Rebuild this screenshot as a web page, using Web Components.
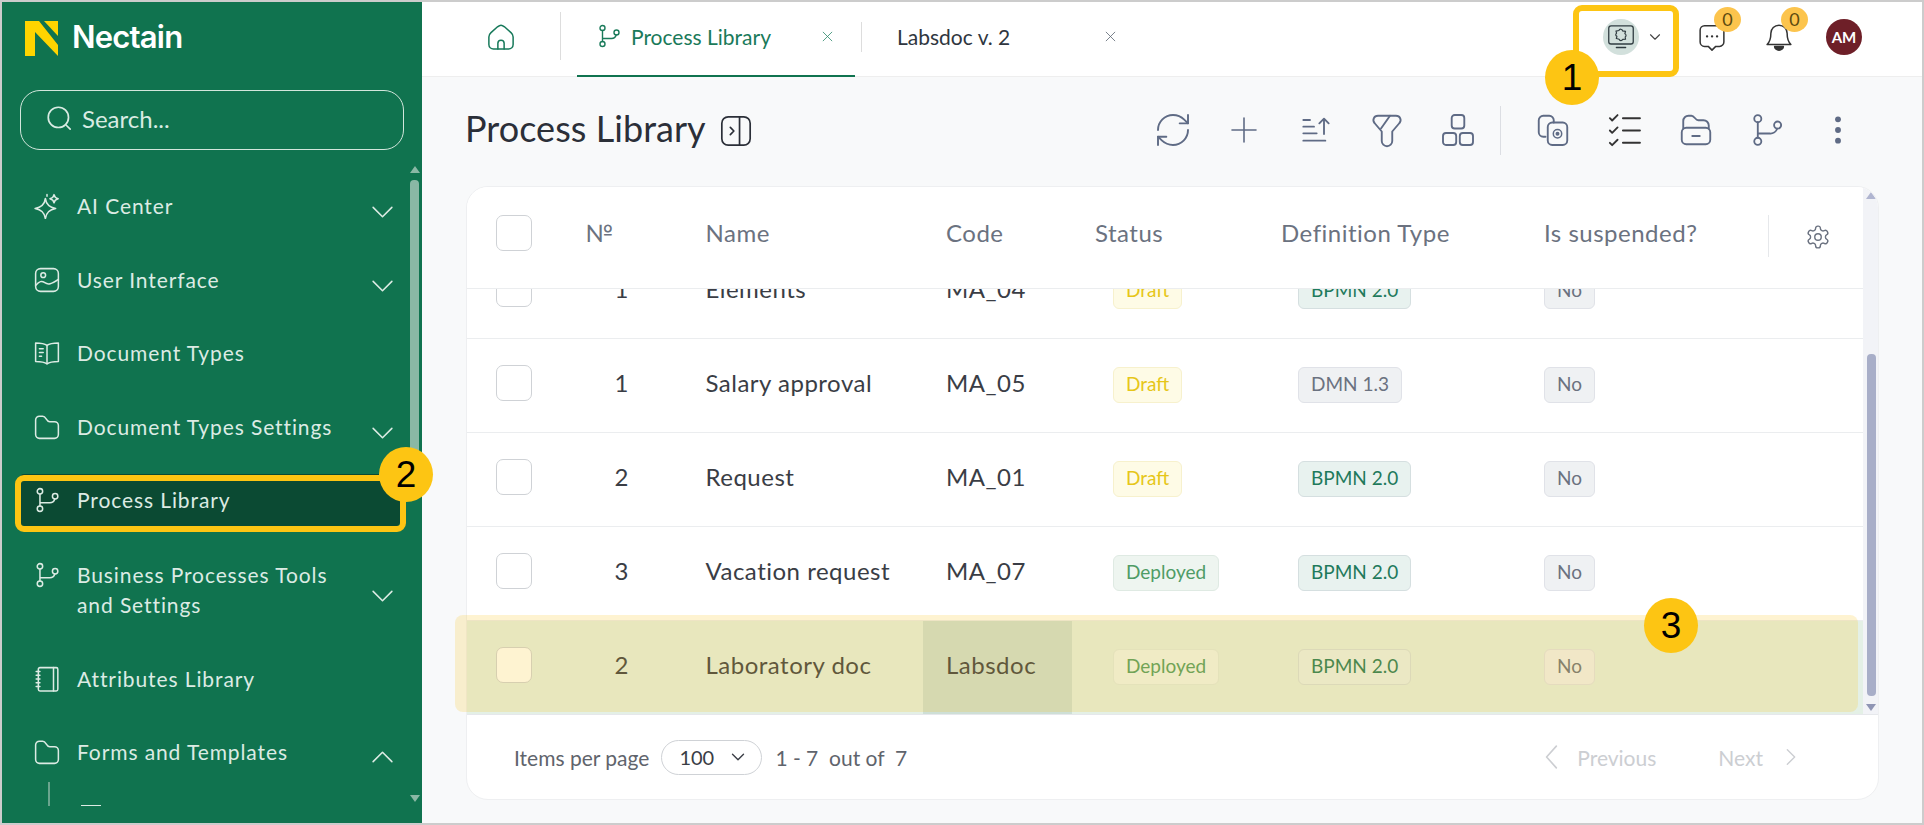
<!DOCTYPE html>
<html lang="en">
<head>
<meta charset="utf-8">
<title>Process Library</title>
<style>
	html, body { margin: 0; padding: 0; background: #f8f9fa; }
	body { font-family: Lato, "Liberation Sans", sans-serif; width: 1924px; height: 825px; overflow: hidden; }
</style>
</head>
<body>
<app-shell>
	<side-bar slot="side">
		<nav-item icon="sparkle" chevron="down">AI Center</nav-item>
		<nav-item icon="image" chevron="down">User Interface</nav-item>
		<nav-item icon="book">Document Types</nav-item>
		<nav-item icon="folder" chevron="down">Document Types Settings</nav-item>
		<nav-item icon="branch" selected>Process Library</nav-item>
		<nav-item icon="branch" chevron="down" tall>Business Processes Tools<br>and Settings</nav-item>
		<nav-item icon="notebook">Attributes Library</nav-item>
		<nav-item icon="folder" chevron="up">Forms and Templates</nav-item>
	</side-bar>
	<top-bar slot="top">
		<tab-item icon="branch" active width="278">Process Library</tab-item>
		<tab-item width="265">Labsdoc v. 2</tab-item>
	</top-bar>
	<page-head slot="main">Process Library</page-head>
	<data-card slot="main">
		<table-row num="1" code="MA_04" status="Draft" type="BPMN 2.0">Elements</table-row>
		<table-row num="1" code="MA_05" status="Draft" type="DMN 1.3">Salary approval</table-row>
		<table-row num="2" code="MA_01" status="Draft" type="BPMN 2.0">Request</table-row>
		<table-row num="3" code="MA_07" status="Deployed" type="BPMN 2.0">Vacation request</table-row>
		<table-row num="2" code="Labsdoc" status="Deployed" type="BPMN 2.0" hot>Laboratory doc</table-row>
	</data-card>
</app-shell>

<call-out kind="wash" style="left:455px;top:615px;width:1403px;height:97px"></call-out>
<call-out kind="box" style="left:1573px;top:5px;width:106px;height:72px"></call-out>
<call-out kind="box" style="left:15px;top:475px;width:391px;height:57px"></call-out>
<call-out kind="dot" style="left:1545px;top:50px">1</call-out>
<call-out kind="dot" style="left:379px;top:447px">2</call-out>
<call-out kind="dot" style="left:1644px;top:598px">3</call-out>

<script>
const ICONS = {
	search: '<circle cx="11" cy="11" r="9"/><path d="M18 18l3.500 3.500"/>',
	sparkle: '<path d="M10.500 5c.6 5 3 8.200 9.500 9.300-6.500 1.100-8.900 4.300-9.500 9.300-.6-5-3-8.200-9.500-9.300 6.500-1.100 8.900-4.300 9.500-9.300z"/><path d="M18.500 1.500c.3 2 1.400 3.200 3.800 3.800-2.400.6-3.500 1.800-3.800 3.800-.3-2-1.400-3.200-3.800-3.800 2.400-.6 3.500-1.800 3.800-3.800z"/><path d="M12 1.500v1.500"/>',
	image: '<rect x="1.500" y="1.500" width="21" height="21" rx="4.500"/><circle cx="8.500" cy="7.500" r="2.200"/><path d="M1.500 17c3.500-4 5.500-4.500 8.500-2.500s6 1.500 12.500-3"/>',
	book: '<path d="M12 5C10 3.500 6.500 2.800 1.500 2.800v17c5 0 8.500.7 10.500 2.200 2-1.500 5.500-2.200 10.500-2.200v-17C17.500 2.800 14 3.500 12 5z"/><path d="M12 5v17M5 8h3.500M5 11.500h3.500M5 15h2"/>',
	folder: '<path d="M1.500 5.500A3.500 3.500 0 0 1 5 2h3c1.500 0 2.300 1 3.200 2.600S13 7.200 14.500 7.200H19a3.500 3.500 0 0 1 3.500 3.500V19a3.500 3.500 0 0 1-3.500 3.500H5A3.500 3.500 0 0 1 1.500 19z"/>',
	branch: '<circle cx="5.500" cy="4" r="2.500"/><circle cx="5.500" cy="20" r="2.500"/><circle cx="19.500" cy="8.500" r="2.500"/><path d="M5.500 6.500v11M5.500 14.500H14a5 5 0 0 0 5.200-3.500"/>',
	notebook: '<rect x="4" y="1.500" width="18" height="21.500" rx="1.500"/><path d="M18 1.500v21.500M2 5h3.500M2 8.500h3.500M2 12h3.500M2 15.500h3.500M2 19h3.500"/>',
	down: '<path d="M3 8l9 9 9-9"/>',
	up: '<path d="M3 16l9-9 9 9"/>',
	small: '<path d="M6 9l6 6 6-6"/>',
	left: '<path d="M16 2L7 12l9 10"/>',
	right: '<path d="M8 4l8 8-8 8"/>',
	close: '<path d="M4 4l16 16M20 4L4 20"/>',
	home: '<path d="M12 2.500c-1.200 0-2 .7-3 1.500L4 8.500c-1.200 1.100-1.700 2-1.700 3.500v6c0 2 1.700 3.500 3.700 3.500h12c2 0 3.700-1.500 3.700-3.500v-6c0-1.500-.5-2.400-1.700-3.500L15 4c-1-.8-1.800-1.500-3-1.500z"/><path d="M9.500 21.500V17a2.500 2.500 0 0 1 5 0v4.500"/>',
	panel: '<rect x="2" y="2" width="20" height="20" rx="4.500"/><path d="M14.500 2v20M8 9.500l2.500 2.500L8 14.500"/>',
	refresh: '<path d="M3 12a9 9 0 0 1 9-9 9.750 9.750 0 0 1 6.740 2.740L21 8"/><path d="M21 3v5h-5"/><path d="M21 12a9 9 0 0 1-9 9 9.750 9.750 0 0 1-6.740-2.740L3 16"/><path d="M8 16H3v5"/>',
	plus: '<path d="M12 3v18M3 12h18"/>',
	sort: '<path d="M2.500 4.500h5M2.500 9.500h8M2.500 14.500h10M2.500 20h16.500M18 15V3.500M14.500 7L18 3.500 21.500 7"/>',
	filter: '<path d="M6 2.500h12c2.800 0 4 3 2.200 5L15.500 13v6.300a3.300 3.300 0 0 1-7 0V13L3.800 7.500C2 5.500 3.200 2.500 6 2.500z"/><path d="M14 2.500L8 11"/>',
	blocks: '<rect x="7.800" y="2" width="8.400" height="9" rx="2"/><rect x="2" y="14" width="8.800" height="8" rx="2"/><rect x="13.200" y="14" width="8.800" height="8" rx="2"/>',
	copyeye: '<path d="M7 16.500H5.500a3 3 0 0 1-3-3v-8a3 3 0 0 1 3-3h4a3 3 0 0 1 3 3V7"/><rect x="8.500" y="7" width="13" height="15" rx="3"/><circle cx="15" cy="14.500" r="2.800" stroke-width="1"/><circle cx="15" cy="14.500" r=".7" fill="currentColor"/>',
	checks: '<path d="M2.500 4l1.500 1.500L7.500 2M2.500 12l1.500 1.500L7.500 10M2.500 20l1.500 1.500L7.500 18" stroke-width="1.200"/><path d="M11 4h11M11 12h11M11 20h11"/>',
	foldermin: '<path d="M3.500 11V6A3.500 3.500 0 0 1 7 2.500h2c2 0 2.500 3 4.500 3H17A3.500 3.500 0 0 1 20.500 9v2"/><rect x="2.500" y="10.500" width="19" height="11" rx="3"/><path d="M9.500 16h5"/>',
	dots: '<circle cx="12" cy="4" r="2.200" fill="currentColor" stroke="none"/><circle cx="12" cy="12" r="2.200" fill="currentColor" stroke="none"/><circle cx="12" cy="20" r="2.200" fill="currentColor" stroke="none"/>',
	chat: '<path d="M6 3h12a3.500 3.500 0 0 1 3.500 3.500V16a3.500 3.500 0 0 1-3.500 3.500h-3L12 22.500l-3-3H6A3.500 3.500 0 0 1 2.500 16V6.500A3.500 3.500 0 0 1 6 3z"/><path d="M8 11.500h.1M12 11.500h.1M16 11.500h.1" stroke-width="1.800"/>',
	bell: '<path d="M12 2.500a6.500 6.500 0 0 0-6.500 6.500c0 5-1 7-3 9h19c-2-2-3-4-3-9A6.500 6.500 0 0 0 12 2.500z"/><path d="M8.500 19.500h7a3.500 3 0 0 1-7 0z" fill="currentColor"/>',
	monitor: '<rect x="1.500" y="2.500" width="21" height="15.500" rx="2"/><path d="M8 21h8"/><path d="M10.200 6.400a1.600 1.600 0 0 1 3.100.3l2.600.5-.6 2a1.500 1.500 0 0 1 .3 2.700l.3 2-2.500.2a1.600 1.600 0 0 1-3-.2l-2.400-.6.500-1.900a1.500 1.500 0 0 1-.3-2.700L7.700 7z" stroke-width="1"/>',
	gear: '<path d="M12.220 2h-.44a2 2 0 0 0-2 2v.18a2 2 0 0 1-1 1.730l-.43.25a2 2 0 0 1-2 0l-.15-.08a2 2 0 0 0-2.730.73l-.22.38a2 2 0 0 0 .73 2.730l.15.1a2 2 0 0 1 1 1.720v.51a2 2 0 0 1-1 1.740l-.15.09a2 2 0 0 0-.73 2.730l.22.38a2 2 0 0 0 2.730.73l.15-.08a2 2 0 0 1 2 0l.43.25a2 2 0 0 1 1 1.730V20a2 2 0 0 0 2 2h.44a2 2 0 0 0 2-2v-.18a2 2 0 0 1 1-1.730l.43-.25a2 2 0 0 1 2 0l.15.08a2 2 0 0 0 2.730-.73l.22-.39a2 2 0 0 0-.73-2.730l-.15-.08a2 2 0 0 1-1-1.740v-.5a2 2 0 0 1 1-1.740l.15-.09a2 2 0 0 0 .73-2.730l-.22-.38a2 2 0 0 0-2.730-.73l-.15.08a2 2 0 0 1-2 0l-.43-.25a2 2 0 0 1-1-1.730V4a2 2 0 0 0-2-2z"/><circle cx="12" cy="12" r="3"/>'
};

class UiIcon extends HTMLElement {
	connectedCallback() {
		const size = this.getAttribute('size') || 24;
		const weight = this.getAttribute('weight') || 1.5;
		this.attachShadow({ mode: 'open' });
		this.shadowRoot.innerHTML = `
			<style>
				:host { display: inline-flex; flex: none; width: ${size}px; height: ${size}px; }
				svg { width: 100%; height: 100%; fill: none; stroke: currentColor; stroke-width: ${weight}; stroke-linecap: round; stroke-linejoin: round; }
			</style>
			<svg viewBox="0 0 24 24">${ICONS[this.getAttribute('name')] || ''}</svg>`;
	}
}

class AppShell extends HTMLElement {
	constructor() {
		super();
		this.attachShadow({ mode: 'open' });
		this.shadowRoot.innerHTML = `
			<style>
				:host { display: flex; box-sizing: border-box; width: 1924px; height: 825px; border: 2px solid #cccccc; background: #f8f9fa; }
				main { flex: 1; display: flex; flex-direction: column; min-width: 0; }
			</style>
			<slot name="side"></slot>
			<main>
				<slot name="top"></slot>
				<slot name="main"></slot>
			</main>`;
	}
}

class SideBar extends HTMLElement {
	constructor() {
		super();
		this.attachShadow({ mode: 'open' });
		this.shadowRoot.innerHTML = `
			<style>
				:host { display: flex; flex-direction: column; flex: none; box-sizing: border-box; width: 420px; height: 821px; padding-bottom: 17px; background: #10734f; color: #dcebe4; }
				.logo { display: flex; align-items: center; gap: 15px; box-sizing: border-box; height: 88px; padding: 0 0 18px 23px; }
				.logo svg { width: 33px; height: 35px; flex: none; margin-top: 2px; }
				.logo span { font: 600 31px Inter, Lato, sans-serif; letter-spacing: -0.8px; color: #ffffff; margin-top: -1px; margin-left: -1px; }
				.search { box-sizing: border-box; display: flex; align-items: center; gap: 9px; width: 384px; height: 60px; margin-left: 18px; padding: 0 0 4px 25px; border: 1px solid #d2e6dc; border-radius: 20px; font-size: 24px; color: #d9ebe3; }
				.body { flex: 1; display: flex; margin-top: 16px; min-height: 0; }
				.list { width: 408px; flex: none; overflow: hidden; padding-top: 3.5px; box-sizing: border-box; }
				.tree { display: flex; margin-top: -7.5px; height: 26px; }
				.tree i { display: block; width: 2px; height: 24px; margin-left: 46px; background: #6aa58e; }
				.tree b { display: block; width: 20px; height: 2px; margin: 23px 0 0 31px; background: #dcebe4; }
				.bar { flex: none; width: 9px; display: flex; flex-direction: column; align-items: center; }
				.tri-up { width: 0; height: 0; border: 5px solid transparent; border-top: 0; border-bottom: 7px solid #8ab8a5; }
				.thumb { width: 9px; height: 282px; margin-top: 7px; border-radius: 4px; background: #8ab8a5; }
				.tri-down { width: 0; height: 0; margin-top: auto; border: 5px solid transparent; border-bottom: 0; border-top: 7px solid #8ab8a5; margin-bottom: 4px; }
			</style>
			<div class="logo">
				<svg viewBox="0 0 33 35"><path fill="#ffd400" d="M0 0H14L33 24V35L10 11V35H0Z"/><path fill="#ffd400" d="M19 0H33V15Z"/></svg>
				<span>Nectain</span>
			</div>
			<div class="search"><ui-icon name="search" size="27" weight="1.5"></ui-icon>Search...</div>
			<div class="body">
				<div class="list">
					<slot></slot>
					<div class="tree"><i></i><b></b></div>
				</div>
				<div class="bar"><div class="tri-up"></div><div class="thumb"></div><div class="tri-down"></div></div>
			</div>`;
	}
}

class NavItem extends HTMLElement {
	connectedCallback() {
		const chevron = this.getAttribute('chevron');
		this.attachShadow({ mode: 'open' });
		this.shadowRoot.innerHTML = `
			<style>
				:host { display: flex; align-items: center; height: 73.5px; font-size: 21px; line-height: 30px; letter-spacing: 0.9px; color: #dcebe4; }
				:host([tall]) { height: 105px; }
				.row { box-sizing: border-box; display: flex; align-items: center; gap: 17px; width: 380px; margin-left: 18px; padding: 0 5px 0 14px; height: 45px; border-radius: 4px; }
				:host([selected]) .row { background: #0b4a33; height: 52px; }
				:host([tall]) .row { height: 60px; }
				.label { flex: 1; min-width: 0; white-space: nowrap; }
				.chev { margin-top: 11px; }
				:host([tall]) .chev { margin-top: 12px; }
				:host([tall]) ui-icon:first-child { margin-top: -29px; }
			</style>
			<div class="row">
				<ui-icon name="${this.getAttribute('icon')}" size="26" weight="1.4"></ui-icon>
				<span class="label"><slot></slot></span>
				${chevron ? `<ui-icon class="chev" name="${chevron}" size="25" weight="1.5"></ui-icon>` : ''}
			</div>`;
	}
}

class TopBar extends HTMLElement {
	constructor() {
		super();
		this.attachShadow({ mode: 'open' });
		this.shadowRoot.innerHTML = `
			<style>
				:host { display: flex; align-items: stretch; box-sizing: border-box; height: 75px; border-bottom: 1px solid #eeeeee; background: #ffffff; }
				.home { width: 138px; flex: none; box-sizing: border-box; display: flex; align-items: center; padding: 0 0 5px 64px; color: #17795a; }
				.sep { width: 1px; height: 48px; margin-top: 10px; background: #dddddd; flex: none; }
				.tabs { display: flex; margin-left: 16px; }
				.right { margin-left: auto; display: flex; align-items: center; padding: 0 60px 4px 0; color: #333333; }
				.ws { width: 36px; height: 36px; border-radius: 50%; background: #d2e0dc; display: flex; align-items: center; justify-content: center; color: #2f3b40; }
				.wschev { margin: 0 33px 0 7px; color: #444444; }
				.bell-wrap { position: relative; display: flex; }
				.badge { position: absolute; left: 17px; top: -15px; width: 27px; height: 25px; border-radius: 50%; background: #fcc44d; color: #5c4a10; font-size: 18px; line-height: 25px; text-align: center; }
				.gap { width: 37px; flex: none; }
				.avatar { width: 36px; height: 36px; margin-left: 32px; border-radius: 50%; background: #6e1f28; color: #ffffff; font: 700 15px/36px Lato, sans-serif; text-align: center; }
			</style>
			<div class="home"><ui-icon name="home" size="30" weight="1.2"></ui-icon></div>
			<div class="sep"></div>
			<div class="tabs"><slot></slot></div>
			<div class="right">
				<div class="ws"><ui-icon name="monitor" size="28" weight="1.1"></ui-icon></div>
				<ui-icon class="wschev" name="small" size="18" weight="1.5"></ui-icon>
				<div class="bell-wrap"><ui-icon name="chat" size="30" weight="1.2"></ui-icon><span class="badge">0</span></div>
				<div class="gap"></div>
				<div class="bell-wrap"><ui-icon name="bell" size="30" weight="1.2"></ui-icon><span class="badge">0</span></div>
				<div class="avatar">AM</div>
			</div>`;
	}
}

class TabItem extends HTMLElement {
	connectedCallback() {
		const icon = this.getAttribute('icon');
		this.attachShadow({ mode: 'open' });
		this.shadowRoot.innerHTML = `
			<style>
				:host { display: flex; align-items: center; box-sizing: border-box; width: ${this.getAttribute('width')}px; height: 75px; padding: 0 0 7px 20px; font-size: 21px; color: #2f3640; position: relative; }
				:host([active]) { color: #1a7a5a; border-bottom: 2px solid #10734f; padding-bottom: 5px; margin-right: 6px; }
				:host(:not([active])) { padding-left: 36px; }
				:host(:not([active]))::before { content: ""; position: absolute; left: 0; top: 20px; width: 1px; height: 30px; background: #dddddd; }
				ui-icon.lead { margin-right: 10px; }
				.close { position: absolute; top: 28px; color: #5d6673; }
				:host([active]) .close { left: 244px; color: #2f8a6c; }
				:host(:not([active])) .close { left: 243px; }
			</style>
			${icon ? `<ui-icon class="lead" name="${icon}" size="24" weight="1.4"></ui-icon>` : ''}
			<slot></slot>
			<ui-icon class="close" name="close" size="13" weight="1.5"></ui-icon>`;
	}
}

class PageHead extends HTMLElement {
	constructor() {
		super();
		this.attachShadow({ mode: 'open' });
		const left = [['refresh', 40, 1.15], ['plus', 32, 1.2], ['sort', 32, 1.4], ['filter', 36, 1.25], ['blocks', 36, 1.25]];
		const right = [['copyeye', 36, 1.25], ['checks', 37, 1.3], ['foldermin', 36, 1.25], ['branch', 34, 1.3], ['dots', 32, 1.5]];
		const slot = ([n, size, weight]) => `<span class="act ${n}"><ui-icon name="${n}" size="${size}" weight="${weight}"></ui-icon></span>`;
		this.shadowRoot.innerHTML = `
			<style>
				:host { display: flex; align-items: center; box-sizing: border-box; height: 109px; padding: 0 48px 3px 43px; color: #2b2f38; }
				h1 { margin: 0 0 4px; font: 400 36px Lato, sans-serif; letter-spacing: 0.05px; }
				.panel { margin-left: 13px; margin-top: 2px; color: #2b2f38; }
				.acts { margin-left: auto; display: flex; align-items: center; color: #5f6b85; }
				.act { width: 71.25px; display: flex; justify-content: center; }
				.act.checks { color: #333333; }
				.sep { width: 1px; height: 49px; background: #dcdee3; margin: 0 17px 0 6px; }
			</style>
			<h1><slot></slot></h1>
			<ui-icon class="panel" name="panel" size="34" weight="1.2"></ui-icon>
			<div class="acts">${left.map(slot).join('')}<div class="sep"></div>${right.map(slot).join('')}</div>`;
	}
}

class DataCard extends HTMLElement {
	constructor() {
		super();
		this.attachShadow({ mode: 'open' });
		this.shadowRoot.innerHTML = `
			<style>
				:host { --cols: 118.5px 120px 217.5px 149px 186px 263px 1fr; display: block; box-sizing: border-box; width: 1413px; height: 614px; margin-left: 44px; background: #ffffff; border: 1px solid #eeeff1; border-radius: 22px; overflow: hidden; }
				.top { display: flex; height: 527px; }
				.table { flex: 1; min-width: 0; display: flex; flex-direction: column; }
				.head { flex: none; box-sizing: border-box; height: 102px; padding-bottom: 10px; display: grid; grid-template-columns: var(--cols); align-items: center; border-bottom: 1px solid #ebedef; background: #ffffff; position: relative; z-index: 1; font-size: 24px; letter-spacing: 0.5px; color: #6b7280; }
				.head span { padding-left: 23px; }
				.head .plain { padding-left: 0; }
				.head check-box { margin-left: 29px; }
				.rows { flex: 1; overflow: hidden; }
				.rows-in { margin-top: -44px; }
				.gear { position: absolute; left: 1338px; top: 29px; display: flex; align-items: center; height: 42px; color: #6b7280; }
				.gear::before { content: ""; position: absolute; left: -37px; top: -1px; width: 1px; height: 42px; background: #e6e8eb; }
				.track { flex: none; width: 16px; background: #f2f3f7; display: flex; flex-direction: column; align-items: center; margin-right: -1px; }
				.tri-up { width: 0; height: 0; border: 5px solid transparent; border-top: 0; border-bottom: 7px solid #b0b5d0; margin-top: 5px; }
				.thumb { width: 9px; height: 342px; margin-top: 155px; border-radius: 4px; background: #a8aec8; }
				.tri-down { width: 0; height: 0; border: 5px solid transparent; border-bottom: 0; border-top: 7px solid #8f95b4; margin-top: 8px; }
				.foot { box-sizing: border-box; height: 85px; display: flex; align-items: center; padding: 0 76px 0 47px; border-top: 1px solid #e6e8eb; font-size: 21px; color: #5f646c; }
				.pick { box-sizing: border-box; width: 101px; height: 35px; margin: 0 13px 0 12px; padding: 0 12px 0 17px; display: flex; align-items: center; justify-content: space-between; border: 1px solid #cfd2d6; border-radius: 18px; color: #3a3d45; font-size: 20px; }
				.pages { margin-left: auto; display: flex; align-items: center; color: #ccced2; }
				.pages .word { margin: 0 62px 0 12px; }
				.pages .next { margin: 0 17px 0 0; }
			</style>
			<div class="top">
				<div class="table">
					<div class="head">
						<check-box></check-box>
						<span class="plain">№</span>
						<span class="plain">Name</span>
						<span>Code</span>
						<span>Status</span>
						<span>Definition Type</span>
						<span>Is suspended?</span>
						<div class="gear"><ui-icon name="gear" size="26" weight="1.3"></ui-icon></div>
					</div>
					<div class="rows"><div class="rows-in"><slot></slot></div></div>
				</div>
				<div class="track"><div class="tri-up"></div><div class="thumb"></div><div class="tri-down"></div></div>
			</div>
			<div class="foot">
				Items per page
				<div class="pick">100<ui-icon name="small" size="22" weight="1.5"></ui-icon></div>
				<span>1 - 7 &nbsp;out of &nbsp;7</span>
				<div class="pages">
					<ui-icon name="left" size="26" weight="1.5"></ui-icon><span class="word">Previous</span>
					<span class="next">Next</span><ui-icon name="right" size="22" weight="1.5"></ui-icon>
				</div>
			</div>`;
	}
}

class CheckBox extends HTMLElement {
	constructor() {
		super();
		this.attachShadow({ mode: 'open' });
		this.shadowRoot.innerHTML = `
			<style>
				:host { display: block; box-sizing: border-box; width: 36px; height: 36px; border: 1px solid #cfd2d6; border-radius: 7px; background: #ffffff; }
			</style>`;
	}
}

class TagChip extends HTMLElement {
	constructor() {
		super();
		this.attachShadow({ mode: 'open' });
		this.shadowRoot.innerHTML = `
			<style>
				:host { display: inline-flex; align-items: center; box-sizing: border-box; height: 36px; padding: 0 12px 4px; border: 1px solid #e0e2e8; border-radius: 6px; background: #eff1f3; color: #6b7280; font-size: 19px; }
				:host([tone="draft"]) { background: #fefbe6; border-color: #f7f1cd; color: #e6c619; }
				:host([tone="deployed"]) { background: #eef5f0; border-color: #dfeae3; color: #4f9c66; }
				:host([tone="bpmn"]) { background: #e8f2ef; border-color: #d5dfe0; color: #1f7a5c; }
			</style>
			<slot></slot>`;
	}
}

class TableRow extends HTMLElement {
	connectedCallback() {
		const status = this.getAttribute('status');
		const type = this.getAttribute('type');
		this.attachShadow({ mode: 'open' });
		this.shadowRoot.innerHTML = `
			<style>
				:host { display: grid; grid-template-columns: var(--cols); height: 94px; box-sizing: border-box; border-bottom: 1px solid #ebedef; font-size: 24px; letter-spacing: 0.5px; color: #3a3d45; }
				:host([hot]) { background: #e4f0e6; }
				.cell { display: flex; align-items: center; padding-bottom: 7px; min-width: 0; }
				.cell.chk { padding-left: 29px; padding-bottom: 6px; }
				.cell.num { justify-content: flex-end; padding-right: 76.5px; }
				.cell.code { padding-left: 23px; }
				:host([hot]) .cell.code { background: #cedfd6; }
				.cell.status { padding-left: 41px; }
				.cell.type { padding-left: 40px; }
				.cell.susp { padding-left: 23px; }
				tag-chip { margin-top: 6px; letter-spacing: 0; }
			</style>
			<div class="cell chk"><check-box></check-box></div>
			<div class="cell num">${this.getAttribute('num')}</div>
			<div class="cell"><slot></slot></div>
			<div class="cell code">${this.getAttribute('code')}</div>
			<div class="cell status"><tag-chip tone="${status.toLowerCase()}">${status}</tag-chip></div>
			<div class="cell type"><tag-chip tone="${type.startsWith('BPMN') ? 'bpmn' : 'grey'}">${type}</tag-chip></div>
			<div class="cell susp"><tag-chip>No</tag-chip></div>`;
	}
}

class CallOut extends HTMLElement {
	constructor() {
		super();
		this.attachShadow({ mode: 'open' });
		this.shadowRoot.innerHTML = `
			<style>
				:host { position: absolute; box-sizing: border-box; display: block; pointer-events: none; }
				:host([kind="wash"]) { background: rgba(252, 196, 25, 0.2); border-radius: 8px; }
				:host([kind="box"]) { border: 6px solid #fdc513; border-radius: 9px; }
				:host([kind="dot"]) { width: 54px; height: 55px; border-radius: 50%; background: #fdc513; color: #000000; font: 37px/55px "Liberation Sans", Arial, sans-serif; text-align: center; }
			</style>
			<slot></slot>`;
	}
}

customElements.define('ui-icon', UiIcon);
customElements.define('app-shell', AppShell);
customElements.define('side-bar', SideBar);
customElements.define('nav-item', NavItem);
customElements.define('top-bar', TopBar);
customElements.define('tab-item', TabItem);
customElements.define('page-head', PageHead);
customElements.define('data-card', DataCard);
customElements.define('check-box', CheckBox);
customElements.define('tag-chip', TagChip);
customElements.define('table-row', TableRow);
customElements.define('call-out', CallOut);
</script>
</body>
</html>
